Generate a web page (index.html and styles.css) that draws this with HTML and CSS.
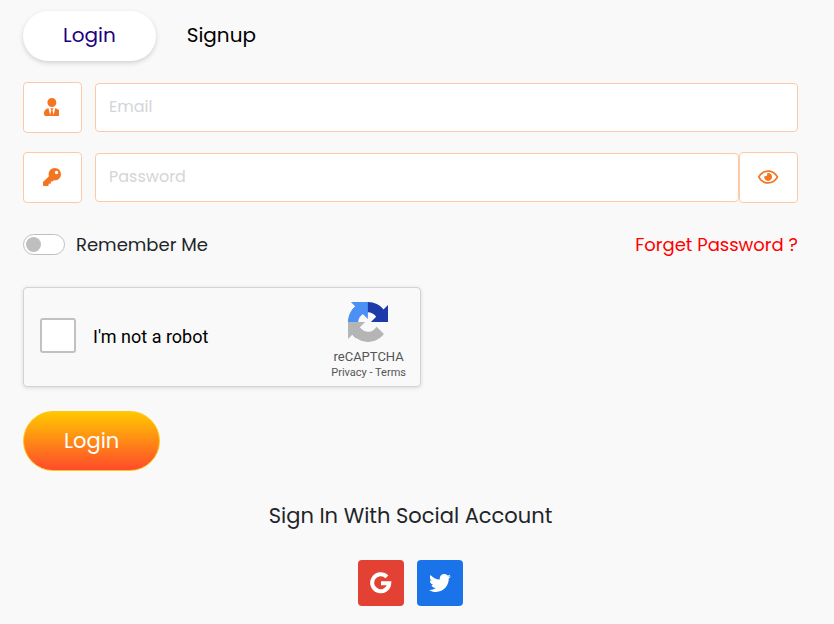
FILE: index.html
```html
<!DOCTYPE html>
<html lang="en">
<head>
<meta charset="utf-8">
<meta name="viewport" content="width=device-width, initial-scale=1">
<title>Login</title>
<link rel="stylesheet" href="styles.css">
</head>
<body>
<main class="auth">
  <nav class="tabs">
    <button type="button" class="tab tab-active">Login</button>
    <button type="button" class="tab">Signup</button>
  </nav>

  <form class="form">
    <div class="field">
      <label class="addon" for="email" aria-label="Email">
        <svg class="icon" viewBox="0 0 448 512"><path d="M224 256c70.7 0 128-57.3 128-128S294.7 0 224 0 96 57.3 96 128s57.3 128 128 128zm95.8 32.6L272 480l-32-136 32-56h-96l32 56-32 136-47.8-191.4C56.9 292 0 350.3 0 422.4V464c0 26.5 21.5 48 48 48h352c26.5 0 48-21.5 48-48v-41.6c0-72.1-56.9-130.4-128.2-133.8z"/></svg>
      </label>
      <input class="input" id="email" type="email" placeholder="Email">
    </div>

    <div class="field">
      <label class="addon" for="password" aria-label="Password">
        <svg class="icon" viewBox="0 0 512 512"><path d="M512 176.001C512 273.203 433.202 352 336 352c-11.22 0-22.19-1.062-32.827-3.069l-24.012 27.014A23.999 23.999 0 0 1 261.223 384H224v40c0 13.255-10.745 24-24 24h-40v40c0 13.255-10.745 24-24 24H24c-13.255 0-24-10.745-24-24v-78.059c0-6.365 2.529-12.47 7.029-16.971l161.802-161.802C163.108 213.814 160 195.271 160 176 160 78.798 238.797.001 335.999 0 433.488-.001 512 78.511 512 176.001zM336 128c0 26.51 21.49 48 48 48s48-21.49 48-48-21.49-48-48-48-48 21.49-48 48z"/></svg>
      </label>
      <input class="input" id="password" type="password" placeholder="Password">
      <button type="button" class="addon addon-end" aria-label="Show password">
        <svg class="icon" viewBox="0 0 576 512"><path d="M288 144a110.94 110.94 0 0 0-31.24 5 55.4 55.4 0 0 1 7.24 27 56 56 0 0 1-56 56 55.4 55.4 0 0 1-27-7.24A111.71 111.71 0 1 0 288 144zm284.52 97.4C518.29 135.59 410.93 64 288 64S57.68 135.64 3.48 241.41a32.35 32.35 0 0 0 0 29.19C57.71 376.41 165.07 448 288 448s230.32-71.64 284.52-177.41a32.35 32.35 0 0 0 0-29.19zM288 400c-98.65 0-189.09-55-237.93-144C98.91 167 189.34 112 288 112s189.09 55 237.93 144C477.1 345 386.66 400 288 400z"/></svg>
      </button>
    </div>

    <div class="options">
      <label class="remember">
        <input class="switch" type="checkbox">
        <span>Remember Me</span>
      </label>
      <a class="forgot" href="#">Forget Password ?</a>
    </div>

    <div class="captcha">
      <label class="captcha-check">
        <input class="captcha-box" type="checkbox">
        <span>I'm not a robot</span>
      </label>
      <div class="captcha-brand">
        <svg class="captcha-logo" viewBox="0 0 64 64">
          <path fill="#1c3aa9" d="M64 31.955l-.033-1.37V4.687l-7.16 7.16C50.948 4.674 42.033.093 32.05.093c-10.4 0-19.622 4.96-25.458 12.64l11.736 11.86a15.55 15.55 0 0 1 4.754-5.334c2.05-1.6 4.952-2.906 8.968-2.906.485 0 .86.057 1.135.163 4.976.393 9.288 3.14 11.828 7.124l-8.307 8.307L64 31.953"/>
          <path fill="#4a90f5" d="M31.862.094l-1.37.033H4.594l7.16 7.16C4.58 13.147 0 22.06 0 32.046c0 10.4 4.96 19.622 12.64 25.458L24.5 45.768a15.55 15.55 0 0 1-5.334-4.754c-1.6-2.05-2.906-4.952-2.906-8.968 0-.485.057-.86.163-1.135.393-4.976 3.14-9.288 7.124-11.828l8.307 8.307L31.86.095"/>
          <path fill="#b5b5b5" d="M.001 32.045l.033 1.37v25.898l7.16-7.16c5.86 7.173 14.774 11.754 24.76 11.754 10.4 0 19.622-4.96 25.458-12.64l-11.736-11.86a15.55 15.55 0 0 1-4.754 5.334c-2.05 1.6-4.952 2.906-8.968 2.906-.485 0-.86-.057-1.135-.163-4.976-.393-9.288-3.14-11.828-7.124l8.307-8.307c-10.522.04-22.4.066-27.295-.005"/>
        </svg>
        <div class="captcha-name">reCAPTCHA</div>
        <div class="captcha-links"><a href="#">Privacy</a><span> - </span><a href="#">Terms</a></div>
      </div>
    </div>

    <button type="submit" class="submit">Login</button>
  </form>

  <section class="social">
    <h2 class="social-title">Sign In With Social Account</h2>
    <div class="social-links">
      <a class="social-link google" href="#" aria-label="Google">
        <svg viewBox="0 0 24 24"><path fill="none" stroke="#fff" stroke-width="4.400" d="M18.400 5.300A9.300 9.300 0 1 0 21 12.200H12"/></svg>
      </a>
      <a class="social-link twitter" href="#" aria-label="Twitter">
        <svg viewBox="0 0 512 512"><path fill="#fff" d="M459.37 151.716c.325 4.548.325 9.097.325 13.645 0 138.72-105.583 298.558-298.558 298.558-59.452 0-114.68-17.219-161.137-47.106 8.447.974 16.568 1.299 25.34 1.299 49.055 0 94.213-16.568 130.274-44.832-46.132-.975-84.792-31.188-98.112-72.772 6.498.974 12.995 1.624 19.818 1.624 9.421 0 18.843-1.3 27.614-3.573-48.081-9.747-84.143-51.98-84.143-102.985v-1.299c13.969 7.797 30.214 12.67 47.431 13.319-28.264-18.843-46.781-51.005-46.781-87.391 0-19.492 5.197-37.36 14.294-52.954 51.655 63.675 129.3 105.258 216.365 109.807-1.624-7.797-2.599-15.918-2.599-24.04 0-57.828 46.782-104.934 104.934-104.934 30.213 0 57.502 12.67 76.67 33.137 23.715-4.548 46.456-13.32 66.599-25.34-7.798 24.366-24.366 44.833-46.132 57.827 21.117-2.273 41.584-8.122 60.426-16.243-14.292 20.791-32.161 39.308-52.628 54.253z"/></svg>
      </a>
    </div>
  </section>
</main>
</body>
</html>
```
FILE: styles.css
```css
* {
  box-sizing: border-box;
}

body {
  margin: 0;
  background: #f9f9f9;
  color: #212529;
  font-family: Poppins, Inter, "Open Sans", sans-serif;
  font-size: 18px;
  line-height: 24px;
}

button,
input {
  font: inherit;
}

a {
  color: inherit;
  text-decoration: none;
}

.auth {
  padding: 11px 36px 16px 23px;
}

.tabs {
  display: flex;
}

.tab {
  height: 50px;
  padding: 0 31px 2px;
  border: 0;
  border-radius: 25px;
  background: none;
  color: #000;
  font-size: 20px;
}

.tab-active {
  padding: 0 40px 2px;
  background: #fff;
  color: #1e0081;
  box-shadow: 0 2px 5px rgba(0, 0, 0, 0.16);
}

.form {
  margin-top: 21px;
}

.field {
  display: flex;
  align-items: center;
  margin-bottom: 19px;
}

.addon {
  display: flex;
  flex: none;
  align-items: center;
  justify-content: center;
  width: 59px;
  height: 51px;
  margin-right: 13px;
  padding: 0 2px 2px 0;
  border: 1px solid #fdc9a7;
  border-radius: 4px;
  background: #fff;
}

.addon-end {
  margin-right: 0;
  padding: 0 0 2px;
}

.icon {
  height: 18px;
  fill: #f47521;
}

.input {
  flex: 1;
  min-width: 0;
  height: 49px;
  padding: 0 13px 2px;
  border: 1px solid #fdc9a7;
  border-radius: 4px;
  background: #fff;
  font-size: 16px;
}

.input::placeholder {
  color: #d2d6d8;
  opacity: 1;
}

.options {
  display: flex;
  align-items: center;
  justify-content: space-between;
  margin-top: 30px;
}

.remember {
  display: flex;
  align-items: center;
  gap: 11px;
}

.switch {
  display: flex;
  align-items: center;
  appearance: none;
  width: 42px;
  height: 21px;
  margin: 0 0 2px;
  padding: 0 2px;
  border: 1px solid #bfbfbf;
  border-radius: 11px;
  background: #fff;
}

.switch::before {
  content: "";
  width: 15px;
  height: 15px;
  border-radius: 50%;
  background: #bfbfbf;
}

.switch:checked {
  justify-content: flex-end;
}

.forgot {
  color: #f00;
}

.captcha {
  display: flex;
  align-items: center;
  justify-content: space-between;
  width: 398px;
  max-width: 100%;
  height: 100px;
  margin-top: 30px;
  padding: 0 14px 0 16px;
  border: 1px solid #d3d3d3;
  border-radius: 4px;
  background: #f9f9f9;
  box-shadow: 0 1px 4px rgba(0, 0, 0, 0.12);
  font-family: Roboto, sans-serif;
}

.captcha-check {
  display: flex;
  align-items: center;
  gap: 17px;
  color: #000;
}

.captcha-box {
  appearance: none;
  width: 36px;
  height: 35px;
  margin: 0 0 4px;
  border: 2px solid #c1c1c1;
  border-radius: 3px;
  background: #fff;
}

.captcha-brand {
  display: flex;
  flex-direction: column;
  align-items: center;
  color: #555;
}

.captcha-logo {
  width: 40px;
  height: 40px;
  margin-top: 8px;
  margin-right: 2px;
}

.captcha-name {
  margin-top: 7px;
  font-size: 13px;
  line-height: 16px;
}

.captcha-links {
  font-size: 11px;
  line-height: 16px;
  white-space: pre;
}

.submit {
  display: block;
  height: 60px;
  margin-top: 24px;
  padding: 0 40px;
  border: 1px solid #ffc61a;
  border-radius: 30px;
  background: linear-gradient(#ffc800, #ff4b2b);
  color: #fff;
  font-size: 21px;
}

.social {
  margin-top: 32px;
  text-align: center;
}

.social-title {
  margin: 0;
  font-size: 21px;
  font-weight: 400;
  line-height: 26px;
}

.social-links {
  display: flex;
  justify-content: center;
  gap: 13px;
  margin-top: 31px;
}

.social-link {
  display: flex;
  align-items: center;
  justify-content: center;
  width: 46px;
  height: 46px;
  border-radius: 4px;
}

.social-link svg {
  width: 22px;
  height: 22px;
}

.google {
  background: #e34133;
}

.twitter {
  background: #1a73e8;
}
```
